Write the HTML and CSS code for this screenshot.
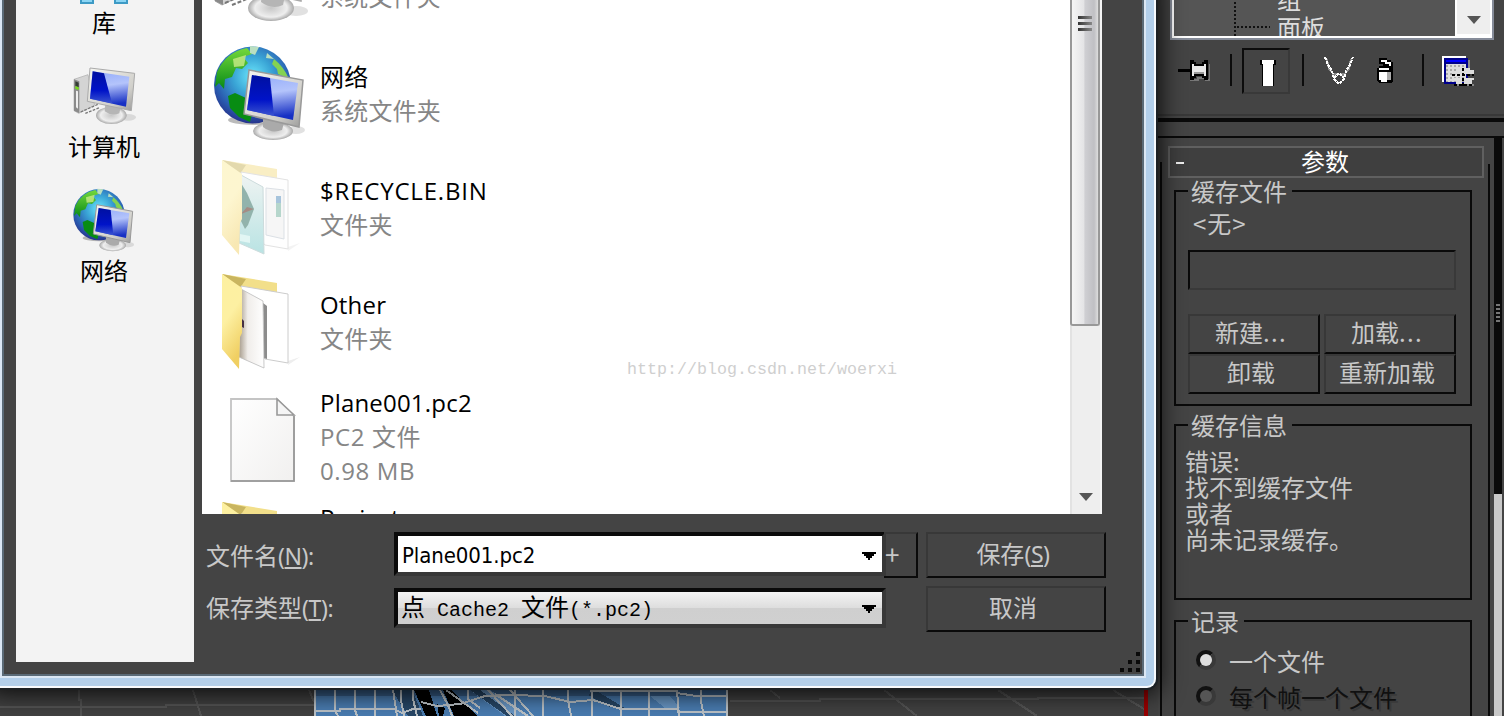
FILE: index.html
```html
<!DOCTYPE html>
<html lang="zh-CN">
<head>
<meta charset="utf-8">
<title>Cache2</title>
<link rel="stylesheet" href="styles.css">
</head>
<body>
<svg class="defs" width="0" height="0" aria-hidden="true">
  <defs>
    <radialGradient id="sea" cx=".5" cy=".38" r=".62"><stop offset="0" stop-color="#6be6fb"/><stop offset=".4" stop-color="#3aa5d6"/><stop offset=".8" stop-color="#2959ae"/><stop offset="1" stop-color="#27348d"/></radialGradient>
    <linearGradient id="land" x1="0" y1="0" x2="0" y2="1"><stop offset="0" stop-color="#74d83b"/><stop offset="1" stop-color="#078a16"/></linearGradient>
    <linearGradient id="dark" x1="0" y1="0" x2="0" y2="1"><stop offset="0" stop-color="#0010a0"/><stop offset=".6" stop-color="#0013c8"/><stop offset="1" stop-color="#3c55cf"/></linearGradient>
    <linearGradient id="lite" x1="0" y1="0" x2=".15" y2="1"><stop offset="0" stop-color="#92abfa"/><stop offset=".45" stop-color="#b4c4fb"/><stop offset="1" stop-color="#1730c4"/></linearGradient>
    <linearGradient id="metal" x1="0" y1="0" x2="1" y2="1"><stop offset="0" stop-color="#f7f7f2"/><stop offset=".7" stop-color="#d0cfca"/><stop offset="1" stop-color="#999"/></linearGradient>
    <radialGradient id="base"><stop offset="0" stop-color="#c7c7c7"/><stop offset=".7" stop-color="#eee"/><stop offset="1" stop-color="#a9a9a9"/></radialGradient>
    <linearGradient id="flap" x1="0" y1="0" x2=".3" y2="1"><stop offset="0" stop-color="#fdf0a0"/><stop offset=".5" stop-color="#fdf0a2"/><stop offset="1" stop-color="#f0cf62"/></linearGradient>
    <linearGradient id="paleflap" x1="0" y1="0" x2=".3" y2="1"><stop offset="0" stop-color="#fdf6cf"/><stop offset=".5" stop-color="#fdf6d0"/><stop offset="1" stop-color="#f8e8b4"/></linearGradient>
    <linearGradient id="sheet"><stop offset="0" stop-color="#a79c8c"/><stop offset=".35" stop-color="#f0edea"/><stop offset="1" stop-color="#fff"/></linearGradient>
    <linearGradient id="page" x1="0" y1="0" x2="1" y2="1"><stop offset="0" stop-color="#fff"/><stop offset="1" stop-color="#f1f0ef"/></linearGradient>
    <linearGradient id="teal" x1="0" y1="0" x2="0" y2="1"><stop offset="0" stop-color="#eef3f2"/><stop offset="1" stop-color="#b9e3e3"/></linearGradient>
    <symbol id="network" viewBox="0 0 96 96">
      <ellipse cx="42" cy="75" rx="26" ry="5" fill="#555" opacity=".4"/>
      <circle cx="40.500" cy="40" r="38.500" fill="url(#sea)"/>
      <path d="M5 27Q14 7 35 3L40 9L31 12L36 18L30 24L24 23L20 32L13 34L12 44L7 38L3 42Z" fill="url(#land)"/>
      <path d="M21 14L34 10L32 21L22 22Z" fill="#c9eb87" opacity=".8"/>
      <path d="M38 1L47 2L43 10L38 8ZM55 8L62 14L54 13Z" fill="#b9dfc0"/>
      <path d="M16 51L23 48L34 53L33 64L40 70L38 77L27 72L18 63Z" fill="#088c13"/>
      <path d="M62 14Q72 22 77 34L66 29L65 24L60 19Z" fill="#84d251"/>
      <ellipse cx="84" cy="85" rx="9" ry="4" fill="#aaa" opacity=".35"/>
      <ellipse cx="61" cy="86" rx="20" ry="9" fill="url(#base)"/>
      <path d="M51 73L72 78L70 85Q60 89 51 82Z" fill="#aaa"/>
      <path d="M37 25L91 35L87 82L32 69Z" fill="url(#metal)" stroke="#999" stroke-width="1.5"/>
      <path d="M40 30L86 38L81 75L35 65Z" fill="url(#lite)"/>
      <path d="M40 30L58 33L62 71L35 65Z" fill="url(#dark)"/>
    </symbol>
    <symbol id="computer" viewBox="0 0 96 96">
      <path d="M3 23L24 16L34 62L10 74L3 70Z" fill="#d4d4d4" stroke="#aaa"/>
      <path d="M3 23L11 26V74L3 70Z" fill="#8a8a8a"/><path d="M5 26L10 28V35L5 33Z" fill="#353d35"/><path d="M5 33L10 35V39L5 37Z" fill="#78dc19"/><path d="M6 40L9 41V67L6 65Z" fill="#eee"/>
      <path d="M13 72L40 60M20 74L42 65" stroke="#777" stroke-width="2" stroke-dasharray="4 2"/>
      <ellipse cx="84" cy="80" rx="12" ry="5" fill="#aaa" opacity=".35"/>
      <ellipse cx="59" cy="77" rx="23" ry="13" fill="url(#base)"/>
      <path d="M50 60L73 65L71 74Q60 79 49 71Z" fill="#b5b5b5"/>
      <path d="M27 6L94 14L89 70L23 56Z" fill="url(#metal)" stroke="#aaa" stroke-width="1.5"/>
      <path d="M31 11L86 19L81 64L27 52Z" fill="url(#lite)"/>
      <path d="M31 11L48 14L60 59L27 52Z" fill="url(#dark)"/>
    </symbol>
    <symbol id="folder" viewBox="0 0 96 96">
      <path d="M76 88L88 84L76 92Z" fill="#eee"/>
      <path d="M10 1L65 10V24L28 18Z" fill="#f2df8a"/><path d="M10 1L34 6L28 15Z" fill="#c9b55f"/>
      <path d="M29 13L76 21V90L53 86L30 60Z" fill="#fff" stroke="#ccc"/>
      <path d="M51 30L55 33V86L52 85Z" fill="#8c8c8c"/>
      <path d="M29 16L51 28L52 95L27 84Z" fill="url(#sheet)" stroke="#bbb" stroke-width=".8"/>
      <path d="M30 46L32 48V55L30 54Z" fill="#453044"/>
      <path d="M10 1L30 15V60L28 64L27 96L10 76Z" fill="url(#flap)"/>
    </symbol>
    <symbol id="bin" viewBox="0 0 96 96">
      <path d="M76 88L88 84L76 92Z" fill="#f3f3f3"/>
      <path d="M10 1L65 10V24L28 18Z" fill="#f9eec4"/><path d="M10 1L34 6L28 15Z" fill="#e3d9ad"/>
      <path d="M29 13L76 21V90L53 86L30 60Z" fill="#fefefe" stroke="#e2e2e2"/>
      <path d="M54 29L72 31V80L54 76Z" fill="#f6f6f6" stroke="#dbe0e5"/>
      <path d="M64 37H69V58H64Z" fill="#b6d6cc"/><path d="M64 37H69V44H64Z" fill="#a7c4dc"/>
      <path d="M29 16L51 28L52 95L27 84Z" fill="url(#teal)" stroke="#ccdbdc"/>
      <path d="M29 24L35 34L42 50L36 66L33 70L28 60Z" fill="#92b3ac"/><path d="M29 55L42 50L35 48Z" fill="#a58c84"/>
      <path d="M28 75L38 77V84L28 82Z" fill="#e2f6f4"/>
      <path d="M10 1L30 15V60L28 64L27 96L10 76Z" fill="url(#paleflap)"/>
    </symbol>
    <symbol id="file" viewBox="0 0 96 96">
      <path d="M19 12H65L82 29V94H19Z" fill="url(#page)" stroke="#c4c4c4" stroke-width="1.800"/>
      <path d="M82 29V94H19" fill="none" stroke="#949494" stroke-width="1.600"/>
      <path d="M65 12V28H82Z" fill="#f5f5f5" stroke="#999" stroke-width="1.600"/>
    </symbol>
  </defs>
</svg>

<div class="screen">
  <div class="viewport">
    <svg width="1158" height="28" viewBox="0 688 1158 28" shape-rendering="crispEdges">
      <g fill="none" stroke="#555" stroke-width="2">
        <path d="M0 707H166V705H314M79 690V700H81V716M193 690L201 716M309 690L314 702M730 701H820V699H1038V698H1144M770 690L780 698M884 690L917 716M998 690L1037 716M1113 690L1144 709"/>
      </g>
      <path fill="#4a7db2" d="M314 690H728V716H314Z"/>
      <path fill="#385f8a" d="M314 690H728V696H314Z"/>
      <path fill="#6997c5" d="M490 690L530 716H505L470 690ZM650 696L670 696L680 708L665 708Z"/>
      <path fill="#274767" d="M392 690H412L423 716H408ZM595 690L625 708L610 707L588 695ZM470 690H480L515 716H507Z"/>
      <path fill="#000" d="M414 690H429L437 716H426ZM443 690H452L477 716H454ZM437 704L445 708L443 716H439Z"/>
      <g fill="none" stroke="#bdc4c9" stroke-width="2">
        <path d="M315 690V716M335 690V711L338 716M355 690V710L357 716M375 690V716M393 690L397 716M401 690V700L404 716M413 690V699L417 716M314 711H340V709H394L402 713L413 709H421M421 702L437 706L460 704L485 696L510 695L545 696L570 702L593 700L621 709H678V712H728M440 690L448 705L452 716M446 690L478 713M468 690V699L480 708M488 690L512 716M495 694L528 716M510 690L533 716M515 690V716M543 690V716M568 690V700L571 716M592 690V716M621 690V716M649 690V716M677 690L679 716M701 690V701L704 716M727 690V716M590 691H677M677 693L696 696H728"/>
      </g>
      <path d="M1146 690V716" stroke="#900" stroke-width="4"/>
    </svg>
  </div>

  <div class="panel">
    <div class="tree">
      <div class="tree-body">
        <svg width="46" height="36" viewBox="0 0 46 36" fill="none" stroke="#111" stroke-width="2" stroke-dasharray="2 2" shape-rendering="crispEdges"><path d="M9 2V36M11 27H44"/></svg>
        <div class="tree-text"><span>组</span><span>面板</span></div>
      </div>
      <div class="tree-scroll"><svg width="14" height="8" viewBox="0 0 14 8"><path d="M0 0H14L7 8Z" fill="#555"/></svg></div>
    </div>
    <div class="toolbar">
      <svg class="pin" width="32" height="22" viewBox="0 0 32 22" shape-rendering="crispEdges"><path d="M12 20H20V18H28V20H32V4" stroke="#777" stroke-width="2" fill="none"/><path d="M12 0H16V2H18V4H24V2H26V0H30V20H26V18H24V16H18V18H16V20H12V12H0V10H12Z" fill="#000"/><path d="M0 9H12V11H0Z" fill="#000"/><path d="M14 4H16V16H14ZM26 4H28V16H26ZM16 6H26V12H16Z" fill="#e8e8e8"/><path d="M16 12H26V14H16Z" fill="#999"/></svg>
      <i class="sep s1"></i>
      <div class="toggle"><svg width="16" height="26" viewBox="0 0 16 26" shape-rendering="crispEdges"><path d="M0 0H16V5H14V26H2V5H0Z" fill="#000"/><path d="M2 0H14V4H13V26H3V4H2Z" fill="#fff"/></svg></div>
      <i class="sep s2"></i>
      <svg class="fork" width="30" height="28" viewBox="0 0 30 28" shape-rendering="crispEdges" fill="none" stroke-width="2"><path d="M3 2L5 12L11 19M27 2L25 12L19 19M9 17H13M17 17H21" stroke="#888"/><path d="M1 0L4 8L8 14L10 22L15 27L20 22L22 14L26 8L29 0M10 21L15 16L20 21" stroke="#fff" stroke-dasharray="3 1"/></svg>
      <svg class="trash" width="20" height="26" viewBox="0 0 20 26" shape-rendering="crispEdges"><path d="M4 0H12V2H16V4H18V23L16 25H4L2 23V10H4V8H8V6H4Z" fill="#000"/><path d="M6 2H12V4H16V8H14V6H10V4H6ZM4 10H14V12H4ZM4 14H12V24H6V22H4Z" fill="#fff"/><path d="M12 14H16V22H12Z" fill="#aaa"/></svg>
      <i class="sep s3"></i>
      <svg class="config" width="32" height="30" viewBox="0 0 32 30" shape-rendering="crispEdges"><path d="M0 0H24V2H2V26H0Z" fill="#fff"/><path d="M2 2H26V28H2Z" fill="#00008b"/><path d="M4 4H24V6H4Z" fill="#00f"/><path d="M4 8H24V26H4Z" fill="#ddd"/><path d="M5 9V26M9 9V26M13 9V26M17 9V26M21 9V26" stroke="#aaa" stroke-width="2" stroke-dasharray="2 2"/><path d="M27 4V12M12 29H32" stroke="#888" stroke-width="2" fill="none"/><path d="M14 12H20V18H10V16H14ZM22 12H28V14H32V18H22ZM10 22H20V28H14V24H10ZM22 22H32V24H30V28H22Z" fill="#ddd"/><path d="M10 19H32M21 12V30M12 29H30" stroke="#000" stroke-width="2" stroke-dasharray="3 2"/></svg>
    </div>
    <div class="divider"></div>
    <div class="params">
      <div class="rollup">
        <div class="rollup-head"><i class="minus"></i><span>参数</span></div>
        <div class="group g-file">
          <span class="legend">缓存文件</span>
          <div class="none">&lt;无&gt;</div>
          <div class="field"></div>
          <div class="btns">
            <div class="btn"><span>新建<span class="dots">...</span></span></div><div class="btn"><span>加载<span class="dots">...</span></span></div>
            <div class="btn"><span>卸载</span></div><div class="btn"><span>重新加载</span></div>
          </div>
        </div>
        <div class="group g-info">
          <span class="legend">缓存信息</span>
          <div class="message">错误:<br>找不到缓存文件<br>或者<br>尚未记录缓存。</div>
        </div>
        <div class="group g-rec">
          <span class="legend">记录</span>
          <div class="radio on"><i></i>一个文件</div>
          <div class="radio off"><i></i>每个帧一个文件</div>
        </div>
      </div>
      <div class="track"><div class="grips"><i></i><i></i><i></i><i></i><i></i></div></div>
    </div>
  </div>

  <div class="dialog">
    <div class="client">
      <div class="places">
        <div class="place"><svg width="64" height="64" viewBox="0 0 64 64"><path d="M9 40H21V63H9ZM43 40H55V63H43Z" fill="#8bd5f4" stroke="#3d9ac5" stroke-width="2"/></svg><span>库</span></div>
        <div class="place"><svg width="64" height="64"><use href="#computer"/></svg><span>计算机</span></div>
        <div class="place"><svg width="64" height="64"><use href="#network"/></svg><span>网络</span></div>
      </div>
      <div class="main">
        <div class="list">
          <div class="items">
            <div class="item"><svg width="96" height="96"><use href="#computer"/></svg><div><b>计算机</b><span>系统文件夹</span></div></div>
            <div class="item"><svg width="96" height="96"><use href="#network"/></svg><div><b>网络</b><span>系统文件夹</span></div></div>
            <div class="item"><svg width="96" height="96"><use href="#bin"/></svg><div><b class="caps">$RECYCLE.BIN</b><span>文件夹</span></div></div>
            <div class="item"><svg width="96" height="96"><use href="#folder"/></svg><div><b>Other</b><span>文件夹</span></div></div>
            <div class="item detail"><svg width="96" height="96"><use href="#file"/></svg><div><b>Plane001.pc2</b><span>PC2 文件</span><span>0.98 MB</span></div></div>
            <div class="item last"><svg width="96" height="96"><use href="#folder"/></svg><div><b>Project</b></div></div>
          </div>
          <div class="scroll">
            <div class="thumb"><i></i><i></i><i></i></div>
            <svg width="14" height="8" viewBox="0 0 14 8"><path d="M0 0H14L7 8Z" fill="#555"/></svg>
          </div>
          <div class="watermark">http://blog.csdn.net/woerxi</div>
        </div>
        <div class="form">
          <label class="name">文件名<span class="key">(<u>N</u>):</span></label>
          <div class="combo edit"><span>Plane001.pc2</span><svg width="14" height="8" viewBox="0 0 14 8" shape-rendering="crispEdges"><path d="M0 0H14V2H12V4H10V6H8V8H6V6H4V4H2V2H0Z"/></svg></div>
          <div class="plus">+</div>
          <div class="btn"><span>保存<span class="key">(<u>S</u>)</span></span></div>
          <label>保存类型<span class="key">(<u>T</u>):</span></label>
          <div class="combo pick"><span>点<em> Cache2 </em>文件<em>(*.pc2)</em></span><svg width="14" height="8" viewBox="0 0 14 8" shape-rendering="crispEdges"><path d="M0 0H14V2H12V4H10V6H8V8H6V6H4V4H2V2H0Z"/></svg></div>
          <div></div>
          <div class="btn"><span>取消</span></div>
        </div>
        <svg class="grip" width="22" height="22" viewBox="0 0 22 22" shape-rendering="crispEdges"><path d="M16 0h4v4h-4zM8 8h4v4h-4zM16 8h4v4h-4zM0 16h4v4h-4zM8 16h4v4h-4zM16 16h4v4h-4z" fill="#0a0a0a"/></svg>
      </div>
    </div>
  </div>
</div>
</body>
</html>
```
FILE: styles.css
```css
* { box-sizing: border-box; }
body { margin: 0; font: 24px/26px "Noto Sans CJK SC", sans-serif; color: #c8c8c8; background: #444; }
svg { display: block; flex: none; }
.defs { position: absolute; }
.screen { position: relative; width: 1504px; height: 716px; overflow: hidden; display: flex; background: #444; }

.viewport { width: 1158px; flex: none; display: flex; align-items: flex-end; background: #424242; }

/* command panel */
.panel { width: 346px; flex: none; display: flex; flex-direction: column; }
.tree { height: 40px; flex: none; margin: 0 10px 0 12px; border: 2px solid #868c99; border-top: 0; padding: 0 2px 2px; background: #fff; display: flex; }
.tree-body { flex: 1; height: 36px; background: #555; display: flex; padding-left: 52px; overflow: hidden; }
.tree-text { display: flex; flex-direction: column; margin: -14px 0 0 5px; height: 54px; color: #ddd; }
.tree-text span + span { margin-top: 2px; }
.tree-scroll { width: 35px; height: 34px; background: #eee; border-left: 2px solid #fff; display: flex; justify-content: center; padding-top: 16px; }
.toolbar { height: 46px; flex: none; margin-top: 8px; display: flex; align-items: center; }
.sep { width: 2px; height: 32px; background: #0c0c0c; flex: none; margin-top: -2px; }
.pin { margin-left: 20px; }
.s1 { margin-left: 20px; }
.toggle { width: 48px; height: 46px; flex: none; margin-left: 10px; border: 2px solid #0c0c0c; border-right-color: #393939; border-bottom-color: #393939; display: flex; justify-content: center; align-items: center; padding-left: 4px; padding-top: 4px; }
.s2 { margin-left: 12px; }
.fork { margin-left: 20px; }
.trash { margin-left: 21px; }
.s3 { margin-left: 27px; }
.config { margin-left: 18px; }
.divider { height: 8px; flex: none; margin-top: 20px; border-top: 2px solid #383838; border-bottom: 4px solid #0a0a0a; }
.params { flex: 1; margin-top: 14px; border-top: 2px solid #0a0a0a; display: flex; min-height: 0; }
.rollup { width: 336px; flex: none; padding: 8px 0 0 10px; height: 578px; overflow: hidden; background: linear-gradient(#0a0a0a, #0a0a0a) 2px 24px / 2px 100% no-repeat, linear-gradient(#0a0a0a, #0a0a0a) 330px 26px / 2px 100% no-repeat; }
.rollup-head { width: 316px; height: 32px; border: 2px solid #606060; background: #3f3f3f; color: #fff; display: flex; align-items: center; justify-content: center; position: relative; }
.rollup-head span { margin: -2px 2px 0 0; }
.minus { position: absolute; left: 6px; top: 14px; width: 8px; height: 2px; background: #eee; }
.group { width: 298px; margin-left: 6px; border: 2px solid #0a0a0a; display: flex; flex-direction: column; align-items: flex-start; }
.legend { margin: -14px 0 0 12px; padding: 0 5px 0 3px; height: 26px; background: #444; flex: none; }
.g-file { height: 216px; margin-top: 12px; }
.none { margin: 6px 0 0 17px; letter-spacing: 1px; }
.field { width: 268px; height: 40px; margin: 14px 0 0 12px; border: 2px solid #0a0a0a; border-right-color: #393939; border-bottom-color: #393939; }
.btns { display: grid; grid-template-columns: 132px 132px; grid-template-rows: 40px 40px; column-gap: 4px; margin: 24px 0 0 12px; }
.btn { border: 2px solid #383838; border-right-color: #0a0a0a; border-bottom-color: #0a0a0a; display: flex; align-items: center; justify-content: center; padding: 0 6px 4px 0; }
.dots { letter-spacing: 1.3px; }
.g-info { height: 176px; margin-top: 18px; }
.message { margin: 10px 0 0 9px; line-height: 26px; }
.g-rec { height: 150px; margin-top: 20px; }
.radio { display: flex; align-items: center; gap: 13px; height: 36px; margin-left: 20px; }
.radio.on { margin-top: 9px; }
.radio.off { color: #101010; text-shadow: 2px 2px #393939; }
.radio i { width: 20px; height: 20px; margin-bottom: 2px; border-radius: 50%; border: 4px solid #111; border-right-color: #393939; border-bottom-color: #393939; background: #555; }
.radio.on i { background: #ddd; }
.track { width: 8px; background: linear-gradient(#0a0a0a 356px, #c8c8c8 356px); padding: 166px 0 0 2px; }
.grips i { display: block; width: 4px; height: 2px; margin-bottom: 2px; background: #777; }

/* dialog window */
.dialog { position: absolute; left: -10px; top: -20px; width: 1166px; height: 708px; border: 2px solid #f6fafe; border-left: 0; background: #b2cfeb; border-radius: 0 0 9px 9px; padding: 0 8px 8px 10px; box-shadow: 0 0 0 2px #1b2025, 0 2px 24px 4px rgba(0, 0, 0, .85); }
.client { width: 1142px; height: 694px; border: 2px solid #5b6b78; border-top: 0; outline: 2px solid #dbe7f4; background: #444; padding: 18px 0 0 12px; display: flex; gap: 8px; margin-left: 2px; }
.places { width: 178px; height: 662px; flex: none; background: #f3f3f3; color: #000; padding-right: 2px; overflow: hidden; }
.place { height: 124px; display: flex; flex-direction: column; align-items: center; }
.place:first-child { margin-top: -60px; }
.place span { margin-top: 2px; line-height: 32px; }
.main { width: 940px; flex: none; display: flex; flex-direction: column; }
.list { position: relative; width: 900px; height: 514px; flex: none; background: #fff; display: flex; overflow: hidden; }
.items { width: 868px; flex: none; margin-top: -78px; font-family: "Open Sans", "Noto Sans CJK SC", sans-serif; }
.item { height: 114px; display: flex; align-items: center; gap: 12px; padding-left: 10px; }
.item div { display: flex; flex-direction: column; margin-top: 2px; line-height: 34px; color: #868686; letter-spacing: .2px; }
.item b { font-weight: 400; color: #000; }
.item .caps { letter-spacing: .8px; }
.item.detail div { margin-top: 4px; }
.item.detail span { letter-spacing: .6px; }
.item.last div { margin-top: -62px; }
.scroll { width: 32px; height: 514px; background: #eee; border-left: 2px solid #e2e2e2; border-right: 2px solid #f6f6f6; display: flex; flex-direction: column; justify-content: space-between; align-items: center; padding-bottom: 13px; }
.thumb { width: 30px; height: 326px; flex: none; margin-left: -2px; border: 2px solid #989898; border-top: 0; border-radius: 0 0 3px 3px; background: linear-gradient(90deg, #f5f5f5, #e4e4e6 45%, #cfcfd3 50%, #c0c0c4 85%, #ddd); display: flex; flex-direction: column; align-items: center; padding-top: 16px; gap: 3px; }
.thumb i { width: 14px; height: 3px; background: linear-gradient(90deg, #333, #888); }
.watermark { position: absolute; left: 425px; top: 357px; font: 16.67px/26px "Liberation Mono", monospace; color: #cfcfcf; }
.form { display: grid; grid-template-columns: 192px 490px 34px 180px; grid-template-rows: 46px 46px; row-gap: 8px; padding-top: 18px; width: 904px; }
.form label { padding: 0 0 4px 4px; align-self: center; white-space: nowrap; }
.form .name { padding-bottom: 0; margin-top: 1px; }
.form .plus { width: 34px; border: 2px solid #383838; border-left: 0; border-right-color: #0a0a0a; border-bottom-color: #0a0a0a; padding: 0 0 2px 1px; display: flex; align-items: center; font-size: 26px; }
.form .btn { margin-left: 8px; margin-right: -8px; }
.key { font-family: "Noto Sans", sans-serif; letter-spacing: -.4px; font-size: 23px; }
.combo { border: 4px solid #0a0a0a; border-right-color: #383838; border-bottom-color: #383838; display: flex; align-items: center; justify-content: space-between; padding: 0 6px 0 4px; color: #000; background: #fff; width: 492px; }
.edit { height: 44px; font-family: "DejaVu Sans Condensed", sans-serif; font-size: 22px; padding-top: 3px; letter-spacing: -.1px; }
.pick { height: 40px; margin-top: 2px; background: linear-gradient(#f4f4f4, #ddd 50%, #cfcfcf 50%, #d0d0d0); padding-top: 1px; padding-left: 3px; }
.pick span { margin-top: -2px; }
.pick em { font: 20px "Liberation Mono", monospace; white-space: pre; }
.grip { align-self: flex-end; margin-top: 20px; }
```
